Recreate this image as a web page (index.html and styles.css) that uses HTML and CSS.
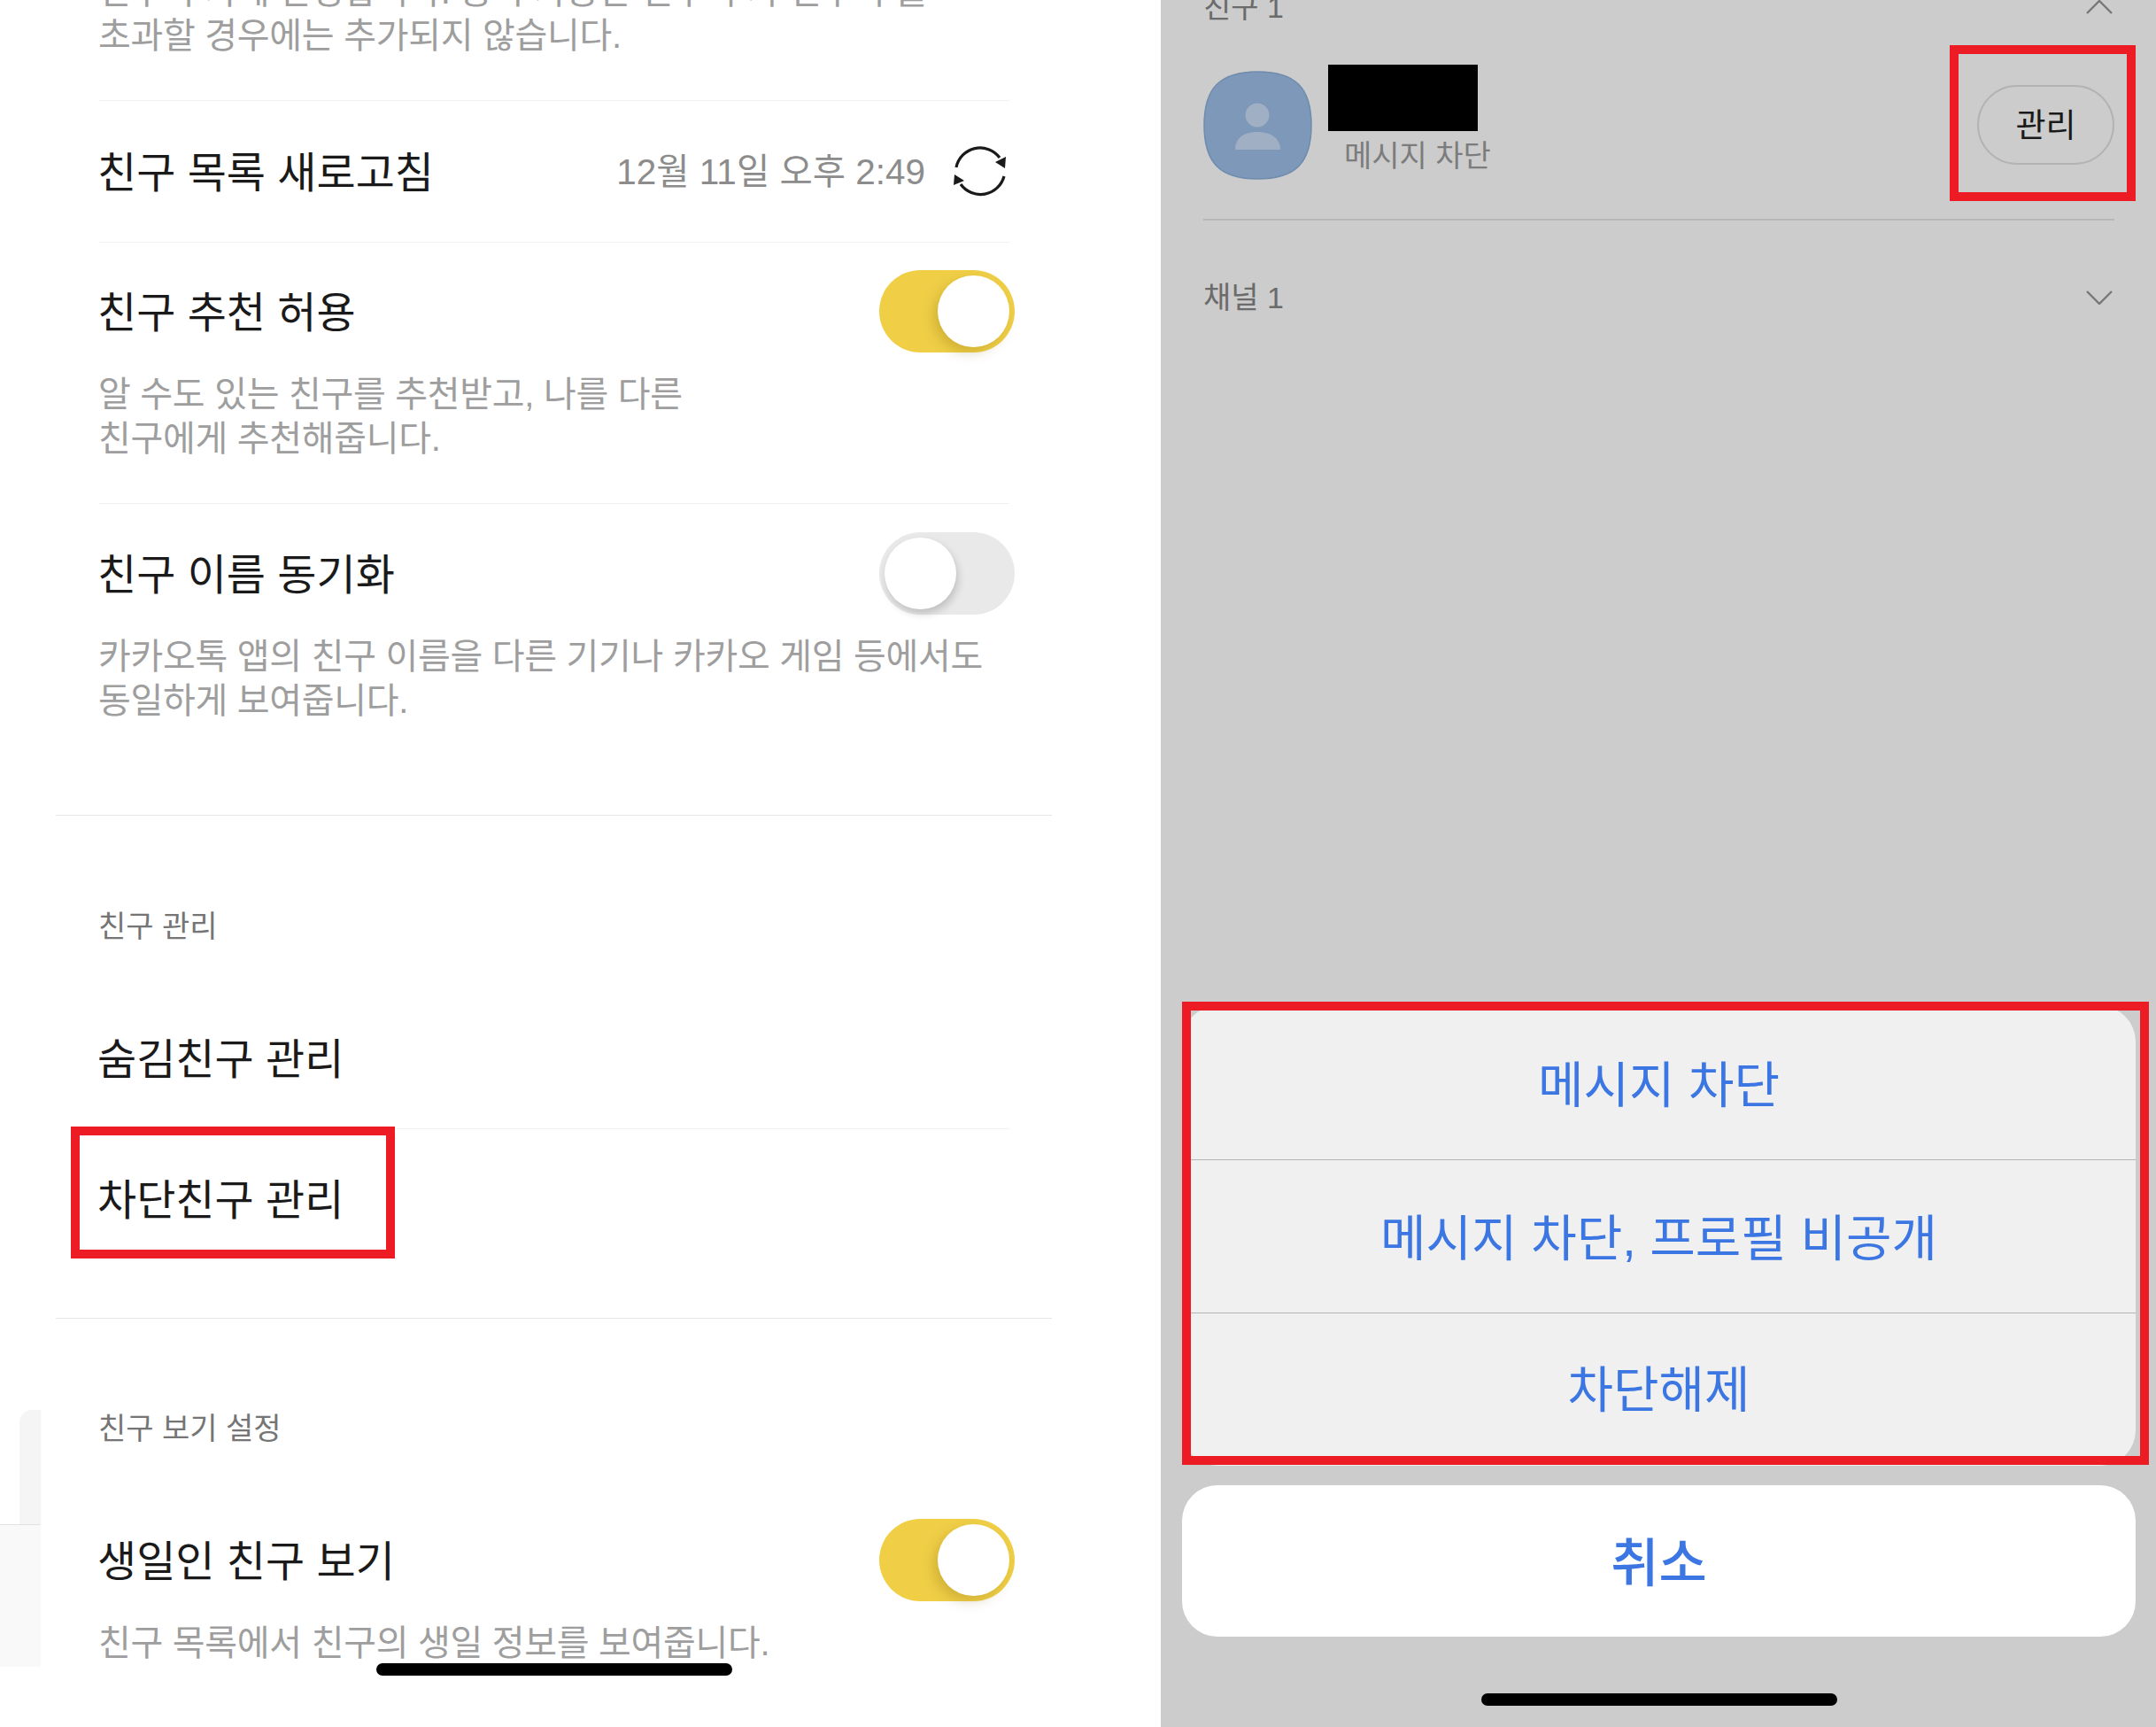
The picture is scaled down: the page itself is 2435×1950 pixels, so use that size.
FILE: index.html
```html
<!DOCTYPE html>
<html lang="ko">
<head>
<meta charset="utf-8">
<title>친구 설정</title>
<link rel="stylesheet" href="styles.css">
</head>
<body>
<div class="page">
  <main class="settings">
    <div class="edge-strip-top"></div>
    <div class="edge-strip-bottom"></div>

    <div class="group first">
      <p class="desc">친구 추가에 반영합니다. 등록 가능한 친구 수가 친구 수를<br>초과할 경우에는 추가되지 않습니다.</p>
    </div>

    <div class="row refresh-row">
      <span class="title">친구 목록 새로고침</span>
      <span class="refresh">
        <span class="time">12월 11일 오후 2:49</span>
        <svg class="refresh-icon" viewBox="20 25 75 75" aria-hidden="true">
          <path d="M30 58A27.5 27.5 0 0 1 79 47" fill="none" stroke="#1a1a1a" stroke-width="3.2"/>
          <path d="M84 68A27.5 27.5 0 0 1 35 77" fill="none" stroke="#1a1a1a" stroke-width="3.2"/>
          <path d="M86 46L85 59L74 52Z" fill="#1a1a1a"/>
          <path d="M28 66L27 78L39 73Z" fill="#1a1a1a"/>
        </svg>
      </span>
    </div>

    <div class="toggle-row">
      <div class="toggle-head">
        <span class="title">친구 추천 허용</span>
        <span class="toggle on"><span class="knob"></span></span>
      </div>
      <p class="desc">알 수도 있는 친구를 추천받고, 나를 다른<br>친구에게 추천해줍니다.</p>
    </div>

    <div class="toggle-row last">
      <div class="toggle-head">
        <span class="title">친구 이름 동기화</span>
        <span class="toggle off"><span class="knob"></span></span>
      </div>
      <p class="desc">카카오톡 앱의 친구 이름을 다른 기기나 카카오 게임 등에서도<br>동일하게 보여줍니다.</p>
    </div>

    <hr class="section-rule rule-a">

    <h2 class="label label-manage">친구 관리</h2>
    <div class="row link-row"><span class="title">숨김친구 관리</span></div>
    <div class="row link-row plain"><span class="title">차단친구 관리</span></div>

    <hr class="section-rule rule-b">

    <h2 class="label label-view">친구 보기 설정</h2>
    <div class="toggle-row birthday">
      <div class="toggle-head">
        <span class="title">생일인 친구 보기</span>
        <span class="toggle on"><span class="knob"></span></span>
      </div>
      <p class="desc">친구 목록에서 친구의 생일 정보를 보여줍니다.</p>
    </div>

    <div class="highlight highlight-blocked"></div>
    <div class="home-bar home-left"></div>
  </main>

  <aside class="blocked">
    <div class="list-head head-friends">
      <span class="list-title">친구 1</span>
      <svg class="chevron" viewBox="0 0 30 16" aria-hidden="true"><path d="M1 15L15 1L29 15" fill="none" stroke="#777" stroke-width="2.4"/></svg>
    </div>

    <div class="friend">
      <svg class="avatar" viewBox="0 0 123 123" aria-hidden="true">
        <path d="M61.5 1C104 1 122 19 122 61.5C122 104 104 122 61.5 122C19 122 1 104 1 61.5C1 19 19 1 61.5 1Z" fill="#7d98b8" stroke="#6f8bad" stroke-width="1.5"/>
        <circle cx="61" cy="50" r="13.5" fill="#a0afc3"/>
        <path d="M36 89C36 75 47 69 61 69C75 69 87 75 87 89Z" fill="#a0afc3"/>
      </svg>
      <div class="friend-text">
        <div class="redaction"></div>
        <span class="friend-status">메시지 차단</span>
      </div>
      <button class="manage">관리</button>
    </div>

    <div class="list-head head-channels">
      <span class="list-title">채널 1</span>
      <svg class="chevron" viewBox="0 0 30 16" aria-hidden="true"><path d="M1 1L15 15L29 1" fill="none" stroke="#777" stroke-width="2.4"/></svg>
    </div>

    <div class="sheet">
      <div class="sheet-options">
        <div class="sheet-item">메시지 차단</div>
        <div class="sheet-item">메시지 차단, 프로필 비공개</div>
        <div class="sheet-item item-last">차단해제</div>
      </div>
      <div class="sheet-cancel">취소</div>
    </div>

    <div class="highlight highlight-manage"></div>
    <div class="highlight highlight-sheet"></div>
    <div class="home-bar home-right"></div>
  </aside>
</div>
</body>
</html>
```

FILE: styles.css
```css
* { box-sizing: border-box; }

html, body {
  margin: 0;
  padding: 0;
  background: #fff;
}

body {
  font-family: "Liberation Sans", "Noto Sans CJK KR", sans-serif;
  overflow: hidden;
}

.page {
  display: flex;
  width: 2435px;
  height: 1950px;
  overflow: hidden;
}

/* Left: friend settings */
.settings {
  position: relative;
  width: 1311px;
  height: 1950px;
  flex: none;
  overflow: hidden;
  background: #fff;
}

.edge-strip-top {
  position: absolute;
  left: 22px;
  top: 1592px;
  width: 24px;
  height: 129px;
  background: #f5f5f5;
  border-top-left-radius: 14px;
}

.edge-strip-bottom {
  position: absolute;
  left: 0;
  top: 1721px;
  width: 46px;
  height: 161px;
  background: #f9f9f9;
  border-top: 1px solid #e2e2e2;
}

.group,
.row,
.toggle-row,
.label {
  position: relative;
  margin-left: 112px;
  margin-right: 171px;
}

.first {
  margin-top: -35px;
  height: 148px;
}

.title {
  margin-left: -2px;
  margin-top: 4px;
  font-size: 48px;
  line-height: 60px;
  color: #1a1a1a;
  font-weight: 400;
  white-space: nowrap;
}

.desc {
  margin: 0 0 0 -1px;
  font-size: 40px;
  line-height: 50px;
  color: #9e9e9e;
  letter-spacing: -0.3px;
  white-space: nowrap;
}

.row {
  display: flex;
  align-items: center;
  justify-content: space-between;
  border-top: 1px solid #f2f2f2;
}

.refresh-row { height: 160px; }

.refresh {
  display: flex;
  align-items: center;
  gap: 25px;
}

.time {
  margin-bottom: 6px;
  font-size: 40.5px;
  color: #8c8c8c;
  white-space: nowrap;
}

.refresh-icon {
  width: 75px;
  height: 75px;
  margin-right: -5px;
  flex: none;
}

.toggle-row {
  border-top: 1px solid #f2f2f2;
  padding: 31px 0 48px;
}

.toggle-row.last {
  padding-top: 32px;
  padding-bottom: 0;
}

.toggle-row.birthday {
  border-top: 0;
  margin-top: 77px;
  padding: 0;
}

.toggle-head {
  display: flex;
  align-items: center;
  justify-content: space-between;
}

.toggle-head + .desc { margin-top: 22px; }

.toggle {
  position: relative;
  width: 153px;
  height: 93px;
  margin-right: -6px;
  border-radius: 47px;
  flex: none;
}

.toggle.on { background: #f0cf47; }
.toggle.off { background: #e9e9e9; }

.knob {
  position: absolute;
  top: 6px;
  width: 81px;
  height: 81px;
  border-radius: 50%;
  background: #fff;
}

.toggle.on .knob {
  left: 66px;
  box-shadow: -5px 6px 14px rgba(120, 90, 0, 0.25);
}

.toggle.off .knob {
  left: 6px;
  box-shadow: 2px 5px 10px rgba(0, 0, 0, 0.18);
}

.section-rule {
  margin: 0 123px 0 63px;
  border: 0;
  border-top: 1px solid #e6e6e6;
}

.rule-a { margin-top: 104px; }
.rule-b { margin-top: 56px; }

.label {
  margin-top: 0;
  margin-bottom: 0;
  font-size: 34px;
  line-height: 50px;
  font-weight: 400;
  color: #757575;
  text-indent: -1px;
}

.label-manage { margin-top: 100px; margin-bottom: 45px; }
.label-view { margin-top: 99px; }

.link-row { height: 158px; border-top: 0; }
.link-row.plain { border-top: 1px solid #f2f2f2; }

/* Right: blocked friend with action sheet */
.blocked {
  position: relative;
  display: flex;
  flex-direction: column;
  flex: 1;
  height: 1950px;
  overflow: hidden;
  padding-bottom: 102px;
  background: #cccccc;
}

.list-head {
  display: flex;
  align-items: center;
  justify-content: space-between;
  margin: 0 47px 0 48px;
}

.head-friends { margin-top: -17px; }
.head-channels { margin-top: 62px; }

.list-title {
  font-size: 34px;
  line-height: 50px;
  color: #6b6b6b;
}

.chevron {
  width: 30px;
  height: 16px;
  margin-right: 2px;
  flex: none;
}

.friend {
  display: flex;
  align-items: flex-start;
  height: 176px;
  margin: 40px 47px 0 48px;
  border-bottom: 2px solid #b8b8b8;
}

.avatar {
  width: 123px;
  height: 123px;
  margin-top: 7px;
  flex: none;
}

.friend-text {
  display: flex;
  flex-direction: column;
  margin-left: 18px;
}

.redaction {
  width: 169px;
  height: 75px;
  background: #000;
}

.friend-status {
  margin-top: 3px;
  margin-left: 18px;
  font-size: 34px;
  line-height: 50px;
  color: #7c7c7c;
  white-space: nowrap;
}

.manage {
  width: 155px;
  height: 90px;
  margin-top: 23px;
  margin-left: auto;
  border: 2px solid #b3b3b3;
  border-radius: 45px;
  background: transparent;
  font: inherit;
  font-size: 37px;
  line-height: 84px;
  color: #1a1a1a;
  padding: 3px 0 0;
}

.sheet {
  width: 1077px;
  margin-top: auto;
  margin-left: 24px;
}

.sheet-options {
  border-radius: 40px;
  overflow: hidden;
  background: #f0f0f0;
}

.sheet-item {
  height: 173px;
  display: flex;
  align-items: center;
  justify-content: center;
  padding-bottom: 5px;
  font-size: 56px;
  color: #3b76e3;
  white-space: nowrap;
}

.sheet-item.item-last { padding-bottom: 9px; }

.sheet-item + .sheet-item { border-top: 1px solid #b4b4b4; }

.sheet-cancel {
  height: 171px;
  margin-top: 22px;
  display: flex;
  align-items: center;
  justify-content: center;
  padding-bottom: 4px;
  border-radius: 40px;
  background: #fff;
  font-size: 59px;
  font-weight: 500;
  color: #3b76e3;
}

/* Overlays */
.highlight {
  position: absolute;
  border: 10px solid #ed1c24;
  pointer-events: none;
}

.highlight-blocked { left: 80px; top: 1272px; width: 366px; height: 149px; }
.highlight-manage { left: 891px; top: 51px; width: 210px; height: 176px; }
.highlight-sheet { left: 24px; top: 1131px; width: 1092px; height: 523px; }

.home-bar {
  position: absolute;
  height: 14px;
  border-radius: 7px;
  background: #000;
}

.home-left { left: 425px; top: 1878px; width: 402px; }
.home-right { left: 362px; top: 1912px; width: 402px; }
```
